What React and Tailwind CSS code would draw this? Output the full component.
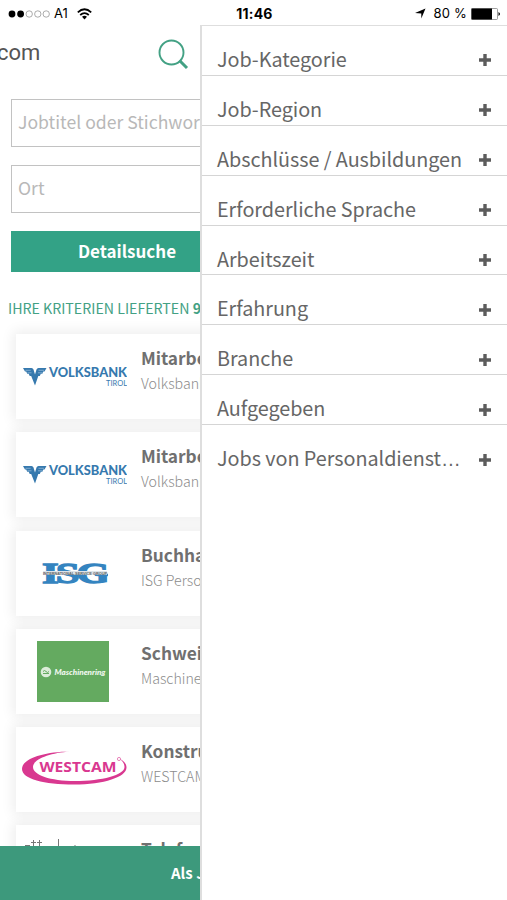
const filters = [
    "Job-Kategorie",
    "Job-Region",
    "Abschlüsse / Ausbildungen",
    "Erforderliche Sprache",
    "Arbeitszeit",
    "Erfahrung",
    "Branche",
    "Aufgegeben",
    "Jobs von Personaldienst…",
];

const Volksbank = () => (
    <svg width="104" height="22" viewBox="0 0 104 22">
        <g fill="#3679ae">
            <path d="M0 2h8.500q1.500 0 2 1.500l1.500 5 1.500-5q.5-1.500 2-1.500H23.500l-2 3.500h-1.200l-1 2.300h-1.500l-1 2.200h-1.500L12 19.500 8.200 10H6.700l-1-2.200H4.200l-1-2.300H2z" />
            <path d="M2.500 4.300h5.200M4.500 6.800h4M15.500 4.300h5.400M15 6.800h4.500" stroke="#9cc0dc" strokeWidth=".7" />
            <text x="26" y="11" fontSize="12.500" fontWeight="900" fontFamily="Lato, sans-serif" textLength="78" lengthAdjust="spacingAndGlyphs">VOLKSBANK</text>
            <text x="83" y="19.500" fontSize="7.500" fontFamily="Lato, sans-serif" textLength="21" lengthAdjust="spacingAndGlyphs">TIROL</text>
        </g>
    </svg>
);

const Isg = () => (
    <svg width="66" height="22" viewBox="0 0 66 22">
        <text x="0" y="20.700" fontSize="29" fontWeight="700" fill="#3484c0" stroke="#3484c0" strokeWidth="1.300" fontFamily="Liberation Serif, serif" letterSpacing="-2" textLength="65" lengthAdjust="spacingAndGlyphs">ISG</text>
        <path d="M1 9h64v3.800H1z" fill="#dde3e8" />
        <text x="1" y="12.500" fontSize="4.300" fontWeight="700" fill="#666" fontFamily="Liberation Sans, sans-serif" textLength="64" lengthAdjust="spacingAndGlyphs">INTERNATIONAL SERVICE GROUP</text>
    </svg>
);

const Maschinenring = () => (
    <svg className="mr-[3px]" width="72" height="61" viewBox="0 0 72 61">
        <path d="M0 0h72v61H0z" fill="#64aa60" />
        <circle cx="9" cy="31" r="5.300" fill="#dcecd9" />
        <path d="M6 30.500q1.500-2 3 0t3 0M6 32.500h6" fill="none" stroke="#64aa60" />
        <text x="17.500" y="33.700" fontSize="8" fontWeight="900" fontStyle="italic" fill="#f0f8ef" fontFamily="Lato, sans-serif" textLength="51" lengthAdjust="spacingAndGlyphs">Maschinenring</text>
    </svg>
);

const Westcam = () => (
    <svg className="mb-[3px]" width="105" height="34" viewBox="0 0 105 34">
        <path d="M48 .5C20 1 0 8 0 18c0 10 22 15.500 52 15.500s52.500-7.500 52.500-17c0-3.500-2.500-6.500-6.500-8.500 3 2.500 4.500 5 4.500 8 0 8-22.500 14-49.500 14-25 0-42-6-42-14S28 2 48 .5z" fill="#d93890" />
        <text x="17.500" y="20.500" fontSize="14" fontWeight="700" fill="#d93890" fontFamily="Open Sans, sans-serif" textLength="77" lengthAdjust="spacingAndGlyphs">WESTCAM</text>
        <circle cx="97" cy="8" r="1.600" fill="none" stroke="#d93890" strokeWidth=".6" />
    </svg>
);

const Hotel = () => (
    <svg width="104" height="30" viewBox="0 0 104 30" fill="none" stroke="#777">
        <path d="M2 6.500h5M8 3.500h5M10.500 1v8M14 3.500h5M16.500 1v8M35.500 0v12M51 7h2" />
    </svg>
);

const jobs = [
    { title: "Mitarbeiter", company: "Volksbank Tirol", logo: <Volksbank /> },
    { title: "Mitarbeiter", company: "Volksbank Tirol", logo: <Volksbank /> },
    { title: "Buchhalter", company: "ISG Personal", logo: <Isg /> },
    { title: "Schweißer", company: "Maschinenring", logo: <Maschinenring /> },
    { title: "Konstrukteur", company: "WESTCAM", logo: <Westcam /> },
    { title: "Telefonist", company: "", logo: <Hotel />, last: true },
];

const StatusBar = () => (
    <div className="h-[25px] shrink-0 flex items-center justify-between pl-2 pr-[6px] pt-[2px] font-['Inter',sans-serif] text-[13px] text-black">
        <div className="flex items-center w-[150px]">
            <svg width="43" height="8" viewBox="0 0 43 8">
                <circle cx="4" cy="4" r="3.400" />
                <circle cx="12.600" cy="4" r="3.400" />
                <g fill="none" stroke="#888" strokeWidth=".7">
                    <circle cx="21.200" cy="4" r="3.200" />
                    <circle cx="29.800" cy="4" r="3.200" />
                    <circle cx="38.200" cy="4" r="3.200" />
                </g>
            </svg>
            <span className="ml-[3px] mr-[9px]">A1</span>
            <svg width="15" height="12" viewBox="0 0 15 12" fill="none" stroke="#000" strokeWidth="1.800">
                <path d="M.8 4.300q6.700-6 13.400 0M3.200 7q4.300-3.800 8.600 0" />
                <path d="M5 8.800q2.500-2 5 0l-2.500 2.700z" fill="#000" stroke="none" />
            </svg>
        </div>
        <span className="font-bold text-[14px] tracking-[0.200px]">11:46</span>
        <div className="flex items-center justify-end w-[150px]">
            <svg width="11" height="11" viewBox="0 0 11 11">
                <path d="M10.500.5L6.300 10.500V5.500L0 5z" />
            </svg>
            <span className="ml-2 tracking-[0.2px]">80 %</span>
            <svg className="ml-1" width="30" height="12" viewBox="0 0 30 12">
                <rect x=".5" y=".5" width="26" height="11" rx="1" fill="#fff" stroke="#777" strokeWidth=".7" />
                <path d="M.5.500h20.500v11H.5z" />
                <path d="M27.500 4q3 2 0 4z" />
            </svg>
        </div>
    </div>
);

const JobCard = ({ job }) => (
    <div className="flex h-[85px] w-[470px] shrink-0 bg-white shadow-[0_0_12px_3px_rgba(0,0,0,0.07)]">
        <div className={job.last ? "w-[117px] flex justify-center pt-[14px]" : "w-[117px] flex items-center justify-center"}>
            {job.logo}
        </div>
        <div className="pl-2 pt-[11px]">
            <p className="text-[17.300px] leading-[26px] font-bold text-[#707070]">{job.title}</p>
            <p className="text-[14.200px] leading-[25px] font-light text-[#8c8c8c]">{job.company}</p>
        </div>
    </div>
);

export default function App() {
    return (
        <div className="w-[507px] h-[900px] flex flex-col overflow-hidden bg-white font-['Noto_Sans_CJK_SC',sans-serif] whitespace-nowrap">
            <StatusBar />
            <div className="flex-1 min-h-0 flex">
                <div className="w-[200px] shrink-0 flex flex-col overflow-hidden">
                    <div className="flex-1 min-h-0 overflow-hidden">
                        <div className="h-[74px] flex items-start justify-between pr-[11px]">
                            <p className="-ml-[3px] pt-[12px] text-[22px] leading-8 text-[#555] font-['Roboto',sans-serif]">com</p>
                            <svg className="mt-[14px]" width="31" height="31" viewBox="0 0 31 31" fill="none" stroke="#43a184">
                                <circle cx="13.500" cy="13.500" r="12" strokeWidth="1.900" />
                                <path d="M21.500 21.500l7.500 7.500" strokeWidth="3" />
                            </svg>
                        </div>
                        <div className="ml-[11px] w-[480px] h-12 border border-[#c2c2c2] px-[6px] pb-[2px] flex items-center text-[17.600px] text-[#b8b8b8]">
                            Jobtitel oder Stichwort
                        </div>
                        <div className="mt-[18px] ml-[11px] w-[480px] h-12 border border-[#c2c2c2] px-[6px] pb-[2px] flex items-center text-[17.600px] text-[#b8b8b8]">
                            Ort
                        </div>
                        <div className="mt-[18px] ml-[11px] w-[232px] h-[41px] pb-[2px] bg-[#33a286] flex items-center justify-center text-[17px] font-bold text-white">
                            Detailsuche
                        </div>
                        <p className="mt-[24px] ml-2 text-[14.200px] leading-6 text-[#43a184]">
                            IHRE KRITERIEN LIEFERTEN <b>9</b>
                        </p>
                        <div className="mt-[14px] ml-4 flex flex-col gap-[13.300px]">
                            {jobs.map((job, i) => (
                                <JobCard key={i} job={job} />
                            ))}
                        </div>
                    </div>
                    <div className="relative h-[54px] shrink-0 bg-[#3d997c] flex items-center pl-[171px] text-[15px] font-bold text-white">
                        Als Job-Mail
                    </div>
                </div>
                <div className="flex-1 min-w-0 border-l-2 border-t border-[#dedede] bg-white">
                    {filters.map((name, i) => (
                        <div
                            key={name}
                            className={`h-[49.900px] flex items-center justify-between pl-[15px] pr-4 pt-[17px] ${i < filters.length - 1 ? "border-b border-[#d5d5d5]" : ""}`}
                        >
                            <span className="text-[19.800px] tracking-[-0.040px] leading-7 text-[#666]">
                                {name.replace("…", "")}
                                {name.endsWith("…") && <span className="font-['Liberation_Sans',sans-serif] tracking-normal">…</span>}
                            </span>
                            <svg className="mt-[3px]" width="12" height="12" viewBox="0 0 12 12" stroke="#5c5c5c" strokeWidth="3.400">
                                <path d="M6 0v12M0 6h12" />
                            </svg>
                        </div>
                    ))}
                </div>
            </div>
        </div>
    );
}
